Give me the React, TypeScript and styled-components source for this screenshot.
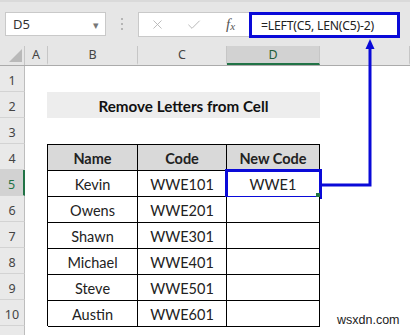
import styled, { createGlobalStyle } from "styled-components";
import { X, Check } from "lucide-react";

const GlobalStyle = createGlobalStyle`
  html, body { margin: 0; padding: 0; background: #fff; }
  * { box-sizing: border-box; }
`;

const BLUE = "#0a0ad8";
const GREEN = "#217346";

const people = [
  { name: "Kevin", code: "WWE101", newCode: "WWE1" },
  { name: "Owens", code: "WWE201", newCode: "" },
  { name: "Shawn", code: "WWE301", newCode: "" },
  { name: "Michael", code: "WWE401", newCode: "" },
  { name: "Steve", code: "WWE501", newCode: "" },
  { name: "Austin", code: "WWE601", newCode: "" },
];

const columns = ["A", "B", "C", "D"];
const rows = [1, 2, 3, 4, 5, 6, 7, 8, 9, 10, 11];

function App() {
  return (
    <Page>
      <GlobalStyle />
      <Toolbar>
        <NameBox>
          <span>D5</span>
          <Caret>▾</Caret>
        </NameBox>
        <Grip>
          <i />
          <i />
          <i />
        </Grip>
        <FormulaBar>
          <IconSlot>
            <X size={15} strokeWidth={1.4} color="#b4b4b4" />
          </IconSlot>
          <IconSlot>
            <Check size={16} strokeWidth={1.4} color="#b4b4b4" />
          </IconSlot>
          <IconSlot>
            <Fx>
              f<sub>x</sub>
            </Fx>
          </IconSlot>
          <FormulaInput>=LEFT(C5, LEN(C5)-2)</FormulaInput>
        </FormulaBar>
      </Toolbar>

      <HeaderRow>
        <Corner>
          <svg width="25" height="19" viewBox="0 0 25 19">
            <polygon points="22,3 22,16 9,16" fill="#b9b9b9" />
          </svg>
        </Corner>
        {columns.map((c) => (
          <ColHead key={c} $active={c === "D"}>
            {c}
          </ColHead>
        ))}
        <ColHead />
      </HeaderRow>

      <Sheet>
        {rows.map((r) => (
          <RowHead key={r} style={{ gridRow: r }} $active={r === 5}>
            {r}
          </RowHead>
        ))}
        <Title>Remove Letters from Cell</Title>
        <Table>
          <Cell $head>Name</Cell>
          <Cell $head>Code</Cell>
          <Cell $head>New Code</Cell>
          {people.map((p, i) => (
            <Row key={p.name}>
              <Cell>{p.name}</Cell>
              <Cell>{p.code}</Cell>
              <Cell $selected={i === 0}>{p.newCode}</Cell>
            </Row>
          ))}
        </Table>
      </Sheet>

      <Connector width="410" height="335" viewBox="0 0 410 335">
        <polyline
          points="322,185 370,185 370,46"
          fill="none"
          stroke={BLUE}
          strokeWidth="3"
        />
        <polygon points="370,39 365.5,49 374.5,49" fill={BLUE} />
      </Connector>

      <Watermark>wsxdn.com</Watermark>
    </Page>
  );
}

const Page = styled.div`
  position: relative;
  width: 410px;
  height: 335px;
  overflow: hidden;
  background: #fff;
  font-family: Lato, "Liberation Sans", sans-serif;
`;

const Toolbar = styled.div`
  display: flex;
  align-items: flex-start;
  height: 46px;
  padding: 10px 0 0 5px;
  background: #e6e6e6;
  border-top: 2px solid #dadada;
`;

const NameBox = styled.div`
  display: flex;
  align-items: center;
  justify-content: space-between;
  width: 101px;
  height: 24px;
  padding: 0 6px 0 7px;
  background: #fff;
  border: 1px solid #c9c9c9;
  font-family: "Noto Sans", sans-serif;
  font-size: 13px;
  color: #333;
`;

const Caret = styled.span`
  font-size: 11px;
  color: #777;
`;

const Grip = styled.div`
  display: flex;
  flex-direction: column;
  align-items: center;
  justify-content: center;
  gap: 3px;
  width: 32px;
  height: 24px;

  & i {
    width: 2px;
    height: 2px;
    background: #b5b5b5;
  }
`;

const FormulaBar = styled.div`
  display: flex;
  height: 26px;
`;

const IconSlot = styled.div`
  display: flex;
  align-items: center;
  justify-content: center;
  width: 37px;
  height: 25px;
  background: #fff;
  border-top: 1px solid #c9c9c9;
  border-bottom: 1px solid #c9c9c9;

  &:first-child {
    border-left: 1px solid #c9c9c9;
  }
`;

const Fx = styled.span`
  font-family: "Liberation Serif", serif;
  font-style: italic;
  font-size: 15px;
  color: #555;

  & sub {
    font-size: 11px;
    vertical-align: -1px;
  }
`;

const FormulaInput = styled.div`
  display: flex;
  align-items: center;
  width: 151px;
  height: 26px;
  padding: 0 0 0 9px;
  background: #fff;
  border: 3px solid ${BLUE};
  font-family: "Noto Sans", sans-serif;
  font-size: 12.2px;
  letter-spacing: -0.2px;
  color: #222;
  white-space: nowrap;
`;

const HeaderRow = styled.div`
  display: grid;
  grid-template-columns: 25px 23px 90px 89px 93px 1fr;
  align-items: end;
  height: 20px;
  background: #e6e6e6;
  border-bottom: 1px solid #ababab;
`;

const Corner = styled.div`
  height: 19px;
  border-right: 1px solid #c6c6c6;
  & svg {
    display: block;
  }
`;

const ColHead = styled.div<{ $active?: boolean }>`
  display: flex;
  align-items: center;
  justify-content: center;
  height: 19px;
  border-right: 1px solid #c6c6c6;
  border-bottom: 2px solid ${(p) => (p.$active ? GREEN : "transparent")};
  background: ${(p) => (p.$active ? "#d2d2d2" : "transparent")};
  font-family: "Noto Sans", sans-serif;
  font-size: 12.5px;
  color: ${(p) => (p.$active ? "#1f5e3b" : "#444")};
`;

const Sheet = styled.div`
  display: grid;
  grid-template-columns: 25px 23px 90px 89px 93px 1fr;
  grid-template-rows: repeat(11, 26px);
`;

const RowHead = styled.div<{ $active?: boolean }>`
  grid-column: 1;
  display: flex;
  align-items: center;
  justify-content: center;
  padding-top: 3px;
  background: ${(p) => (p.$active ? "#d2d2d2" : "#e9e9e9")};
  border-bottom: 1px solid #d3d3d3;
  border-right: ${(p) => (p.$active ? `2px solid ${GREEN}` : "1px solid #bdbdbd")};
  font-family: "Noto Sans", sans-serif;
  font-size: 12.5px;
  color: ${(p) => (p.$active ? GREEN : "#444")};
`;

const Title = styled.div`
  grid-column: 3 / 6;
  grid-row: 2;
  display: flex;
  align-items: center;
  justify-content: center;
  margin-left: -1px;
  padding-top: 2px;
  background: #ededed;
  font-weight: 700;
  font-size: 15.2px;
  color: #111;
`;

const Table = styled.div`
  grid-column: 3 / 6;
  grid-row: 4 / 11;
  display: grid;
  grid-template-columns: 90px 89px 93px;
  grid-auto-rows: 26px;
  margin-left: -1px;
  border-left: 1px solid #000;
  border-top: 1px solid #000;
`;

const Row = styled.div`
  display: contents;
`;

const Cell = styled.div<{ $head?: boolean; $selected?: boolean }>`
  position: relative;
  display: flex;
  align-items: center;
  justify-content: center;
  padding-top: 2px;
  border-right: 1px solid #000;
  border-bottom: 1px solid #000;
  background: ${(p) => (p.$head ? "#d9d9d9" : "#fff")};
  font-weight: ${(p) => (p.$head ? 700 : 400)};
  font-size: 14.5px;
  color: #222;
  outline: ${(p) => (p.$selected ? `3px solid ${BLUE}` : "none")};
  outline-offset: -1px;

  &::after {
    content: "";
    display: ${(p) => (p.$selected ? "block" : "none")};
    position: absolute;
    right: -1px;
    bottom: -1px;
    width: 4px;
    height: 4px;
    background: ${GREEN};
  }
`;

const Connector = styled.svg`
  position: absolute;
  left: 0;
  top: 0;
  pointer-events: none;
`;

const Watermark = styled.div`
  position: absolute;
  left: 337px;
  top: 313px;
  font-family: "Liberation Sans", sans-serif;
  font-size: 12.5px;
  color: #222;
`;

export default App;
